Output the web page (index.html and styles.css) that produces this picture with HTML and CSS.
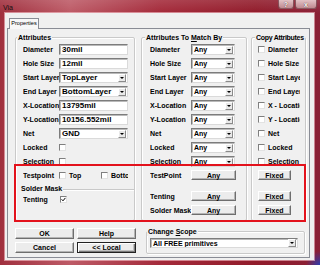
FILE: index.html
```html
<!DOCTYPE html>
<html>
<head>
<meta charset="utf-8">
<title>Via</title>
<link rel="stylesheet" href="styles.css">
</head>
<body>
<div class="window">
  <!-- title bar -->
  <div class="titlebar">
    <span class="title">Via</span>
    <div class="caption">
      <span class="cap cap-help">?</span>
      <span class="cap cap-close">x</span>
    </div>
  </div>

  <div class="client">
    <div class="tabs"><span class="tab">Properties</span></div>
    <div class="panel">
      <div class="groups">
        <!-- Attributes -->
        <div class="group g-attr">
          <div class="group-title">Attributes</div>
          <div class="rows">
            <div class="row"><span class="lbl">Diameter</span><span class="edit">30mil</span></div>
            <div class="row"><span class="lbl">Hole Size</span><span class="edit">12mil</span></div>
            <div class="row"><span class="lbl">Start Layer</span><span class="select wide"><span class="val">TopLayer</span><span class="arrow"></span></span></div>
            <div class="row"><span class="lbl">End Layer</span><span class="select wide"><span class="val">BottomLayer</span><span class="arrow"></span></span></div>
            <div class="row"><span class="lbl">X-Location</span><span class="edit">13795mil</span></div>
            <div class="row"><span class="lbl">Y-Location</span><span class="edit">10156.552mil</span></div>
            <div class="row"><span class="lbl">Net</span><span class="select wide"><span class="val">GND</span><span class="arrow"></span></span></div>
            <div class="row"><span class="lbl">Locked</span><span class="cb"></span></div>
            <div class="row"><span class="lbl">Selection</span><span class="cb"></span></div>
            <div class="row">
              <span class="lbl">Testpoint</span>
              <span class="check c-top"><span class="cb"></span><span class="ct">Top</span></span>
              <span class="check c-bot"><span class="cb"></span><span class="ct">Bottom</span></span>
            </div>
            <div class="subhead">Solder Mask</div>
            <div class="row"><span class="lbl">Tenting</span><span class="cb checked"><svg viewBox="0 0 5 5" width="5" height="5"><path d="M0.6 2.3 L2 3.8 L4.4 0.9" fill="none" stroke="#000" stroke-width="1"/></svg></span></div>
          </div>
        </div>

        <!-- Attributes To Match By -->
        <div class="group g-match">
          <div class="group-title">Attributes To <u>M</u>atch By</div>
          <div class="rows">
            <div class="row"><span class="lbl">Diameter</span><span class="select"><span class="val">Any</span><span class="arrow"></span></span></div>
            <div class="row"><span class="lbl">Hole Size</span><span class="select"><span class="val">Any</span><span class="arrow"></span></span></div>
            <div class="row"><span class="lbl">Start Layer</span><span class="select"><span class="val">Any</span><span class="arrow"></span></span></div>
            <div class="row"><span class="lbl">End Layer</span><span class="select"><span class="val">Any</span><span class="arrow"></span></span></div>
            <div class="row"><span class="lbl">X-Location</span><span class="select"><span class="val">Any</span><span class="arrow"></span></span></div>
            <div class="row"><span class="lbl">Y-Location</span><span class="select"><span class="val">Any</span><span class="arrow"></span></span></div>
            <div class="row"><span class="lbl">Net</span><span class="select"><span class="val">Any</span><span class="arrow"></span></span></div>
            <div class="row"><span class="lbl">Locked</span><span class="select"><span class="val">Any</span><span class="arrow"></span></span></div>
            <div class="row"><span class="lbl">Selection</span><span class="select"><span class="val">Any</span><span class="arrow"></span></span></div>
            <div class="row"><span class="lbl">TestPoint</span><span class="btn b-any">Any</span></div>
            <div class="row spaced"><span class="lbl">Tenting</span><span class="btn b-any">Any</span></div>
            <div class="row"><span class="lbl">Solder Mask</span><span class="btn b-any">Any</span></div>
          </div>
        </div>

        <!-- Copy Attributes -->
        <div class="group g-copy">
          <div class="group-title">Copy Attributes</div>
          <div class="rows">
            <div class="row"><span class="cb"></span><span class="ct">Diameter</span></div>
            <div class="row"><span class="cb"></span><span class="ct">Hole Size</span></div>
            <div class="row"><span class="cb"></span><span class="ct">Start Layer</span></div>
            <div class="row"><span class="cb"></span><span class="ct">End Layer</span></div>
            <div class="row"><span class="cb"></span><span class="ct">X - Location</span></div>
            <div class="row"><span class="cb"></span><span class="ct">Y - Location</span></div>
            <div class="row"><span class="cb"></span><span class="ct">Net</span></div>
            <div class="row"><span class="cb"></span><span class="ct">Locked</span></div>
            <div class="row"><span class="cb"></span><span class="ct">Selection</span></div>
            <div class="row"><span class="btn b-fixed">Fixed</span></div>
            <div class="row spaced"><span class="btn b-fixed">Fixed</span></div>
            <div class="row"><span class="btn b-fixed">Fixed</span></div>
          </div>
        </div>
      </div>

      <div class="bottom">
        <div class="buttons">
          <span class="btn">OK</span>
          <span class="btn">Help</span>
          <span class="btn">Cancel</span>
          <span class="btn default">&lt;&lt; Local</span>
        </div>
        <div class="group g-scope">
          <div class="group-title">Change <u>S</u>cope</div>
          <span class="select scope"><span class="val">All FREE primitives</span><span class="arrow"></span></span>
        </div>
      </div>

      <!-- red annotation box -->
      <div class="highlight"></div>
    </div>
  </div>
</div>
</body>
</html>
```

FILE: styles.css
```css
* { box-sizing: border-box; }
html, body { margin: 0; padding: 0; }
body {
  width: 320px; height: 265px; overflow: hidden;
  font-family: "Liberation Sans", Arial, sans-serif;
  font-size: 7px; font-weight: bold; color: #000;
}

/* window frame */
.window {
  width: 320px; height: 265px;
  display: flex; flex-direction: column;
  background:
    radial-gradient(circle at 100% 100%, #2c3cb0 0, rgba(44,60,176,0) 14px),
    linear-gradient(90deg, #a0303e 0%, #bd5a66 22%, #a42a3a 50%, #911b2a 80%, #8a2036 100%);
}
.titlebar {
  height: 13px; display: flex; align-items: flex-start;
  background: linear-gradient(to bottom, rgba(255,255,255,.12), rgba(0,0,0,0));
}
.title {
  font-weight: normal; font-size: 7px; line-height: 7px;
  margin: 4px 0 0 3px; color: #111;
}
.caption { margin-left: auto; margin-right: 3px; display: flex; gap: 1px; }
.cap {
  height: 9px; display: flex; align-items: center; justify-content: center;
  background: linear-gradient(#e2c2c6, #c08a91);
  border: 1px solid rgba(70,10,20,.55); border-top: none;
  border-radius: 0 0 3px 3px;
  color: #fff; font-size: 7px; line-height: 7px;
  text-shadow: 0 0 1px #300;
}
.cap-help { width: 16px; }
.cap-close { width: 22px; }

.client {
  flex: 1; margin: 0 6px 5px 5px;
  background: #f0f0f0;
  box-shadow: 0 0 0 1px rgba(255,215,220,.55);
  padding: 5px 4px 2px 2px;
  display: flex; flex-direction: column;
}

/* tab */
.tabs { display: flex; height: 10px; }
.tab {
  position: relative; z-index: 1;
  margin-left: 2px; width: 30px; height: 11px;
  border: 1px solid #898c95; border-bottom: none;
  background: #f7f7f7;
  font-weight: normal; font-size: 5.6px; line-height: 9px; text-align: center;
}
.panel {
  position: relative; flex: 1;
  border: 1px solid #898c95;
  background: #f0f0f0;
  padding: 8px 0 0 7px;
}

/* group boxes */
.groups { display: flex; height: 184px; }
.group {
  border: 1px solid #c9c9c9; border-radius: 2px;
  box-shadow: inset 1px 1px 0 #fff, 1px 1px 0 #fff;
}
.group-title {
  width: max-content; height: 9px; line-height: 9px;
  margin: -5px 0 0 -5px; padding: 0 1px;
  background: #f0f0f0;
}
.rows { margin-top: 2px; }
.row { display: flex; align-items: center; height: 11px; margin-bottom: 3px; white-space: nowrap; }
.row.spaced { margin-top: 10px; }
.lbl { overflow: hidden; white-space: nowrap; line-height: 11px; }

.g-attr { width: 120px; margin-right: 6px; padding-left: 7px; }
.g-attr .group-title { margin-left: -6px; }
.g-attr .lbl { width: 36px; }
.g-match { width: 106px; margin-right: 4px; padding-left: 8px; }
.g-match .lbl { width: 41px; }
.g-copy { width: 55px; padding-left: 6px; }
.g-copy .group-title { margin-left: -3px; letter-spacing: -0.3px; }
.g-copy .ct { width: 32px; overflow: hidden; }

/* inputs */
.edit, .select {
  height: 11px; background: #fff;
  border: 1px solid; border-color: #7c7c7c #dadada #dadada #7c7c7c;
  box-shadow: inset 1px 1px 0 #b9b9b9;
  display: flex; align-items: center;
  padding-left: 2px; white-space: nowrap; overflow: hidden;
}
.edit { width: 69px; font-size: 8px; }
.select { width: 44px; }
.select.wide { width: 69px; font-size: 8px; }
.arrow {
  margin-left: auto; margin-right: 1px;
  width: 8px; height: 8px; flex: none;
  background: #e9e9e9;
  border: 1px solid; border-color: #fff #8a8a8a #8a8a8a #fff;
  display: flex; align-items: center; justify-content: center;
}
.arrow::after {
  content: ""; border-top: 2px solid #000;
  border-left: 2px solid transparent; border-right: 2px solid transparent;
}

/* checkboxes */
.cb {
  width: 7px; height: 7px; flex: none; background: #fff;
  border: 1px solid; border-color: #7f7f7f #e2e2e2 #e2e2e2 #7f7f7f;
  display: flex; align-items: center; justify-content: center;
}
.cb.checked { margin-left: 1px; }
.ct { margin-left: 3px; line-height: 11px; }
.check { display: flex; align-items: center; overflow: hidden; }
.c-top { width: 42px; }
.c-bot { width: 27px; }

.subhead {
  display: flex; align-items: center; height: 9px; margin: 0 0 1px -2px;
}
.subhead::after {
  content: ""; flex: 1; margin-left: 1px; margin-top: 2px;
  border-top: 1px solid #c9c9c9; border-bottom: 1px solid #fff;
}

/* push buttons */
.btn {
  height: 11px; display: flex; align-items: center; justify-content: center;
  background: #ececec;
  border: 1px solid; border-color: #fff #6e6e6e #6e6e6e #fff;
  box-shadow: inset -1px -1px 0 #b4b4b4;
  line-height: 9px; white-space: nowrap;
}
.b-any { width: 45px; height: 10px; align-self: flex-start; }
.b-fixed { width: 33px; height: 10px; align-self: flex-start; }
.btn.default {
  border-color: #222;
  box-shadow: inset 1px 1px 0 #fff, inset -1px -1px 0 #7a7a7a, inset -2px -2px 0 #c0c0c0;
}

/* bottom area */
.bottom { display: flex; margin-top: 7px; }
.buttons {
  display: grid; grid-template-columns: 59px 59px; grid-auto-rows: 11px;
  gap: 3px; width: 121px;
}
.g-scope {
  width: 159px; height: 23px; margin: 3px 0 0 10px; padding-left: 3px;
}
.g-scope .group-title { margin-left: -3px; }
.select.scope { width: 148px; height: 10px; margin-top: 2px; }

/* annotation */
.highlight {
  position: absolute; left: 6px; top: 135px;
  width: 292px; height: 58px;
  border: 2px solid #e3121c;
}
```
